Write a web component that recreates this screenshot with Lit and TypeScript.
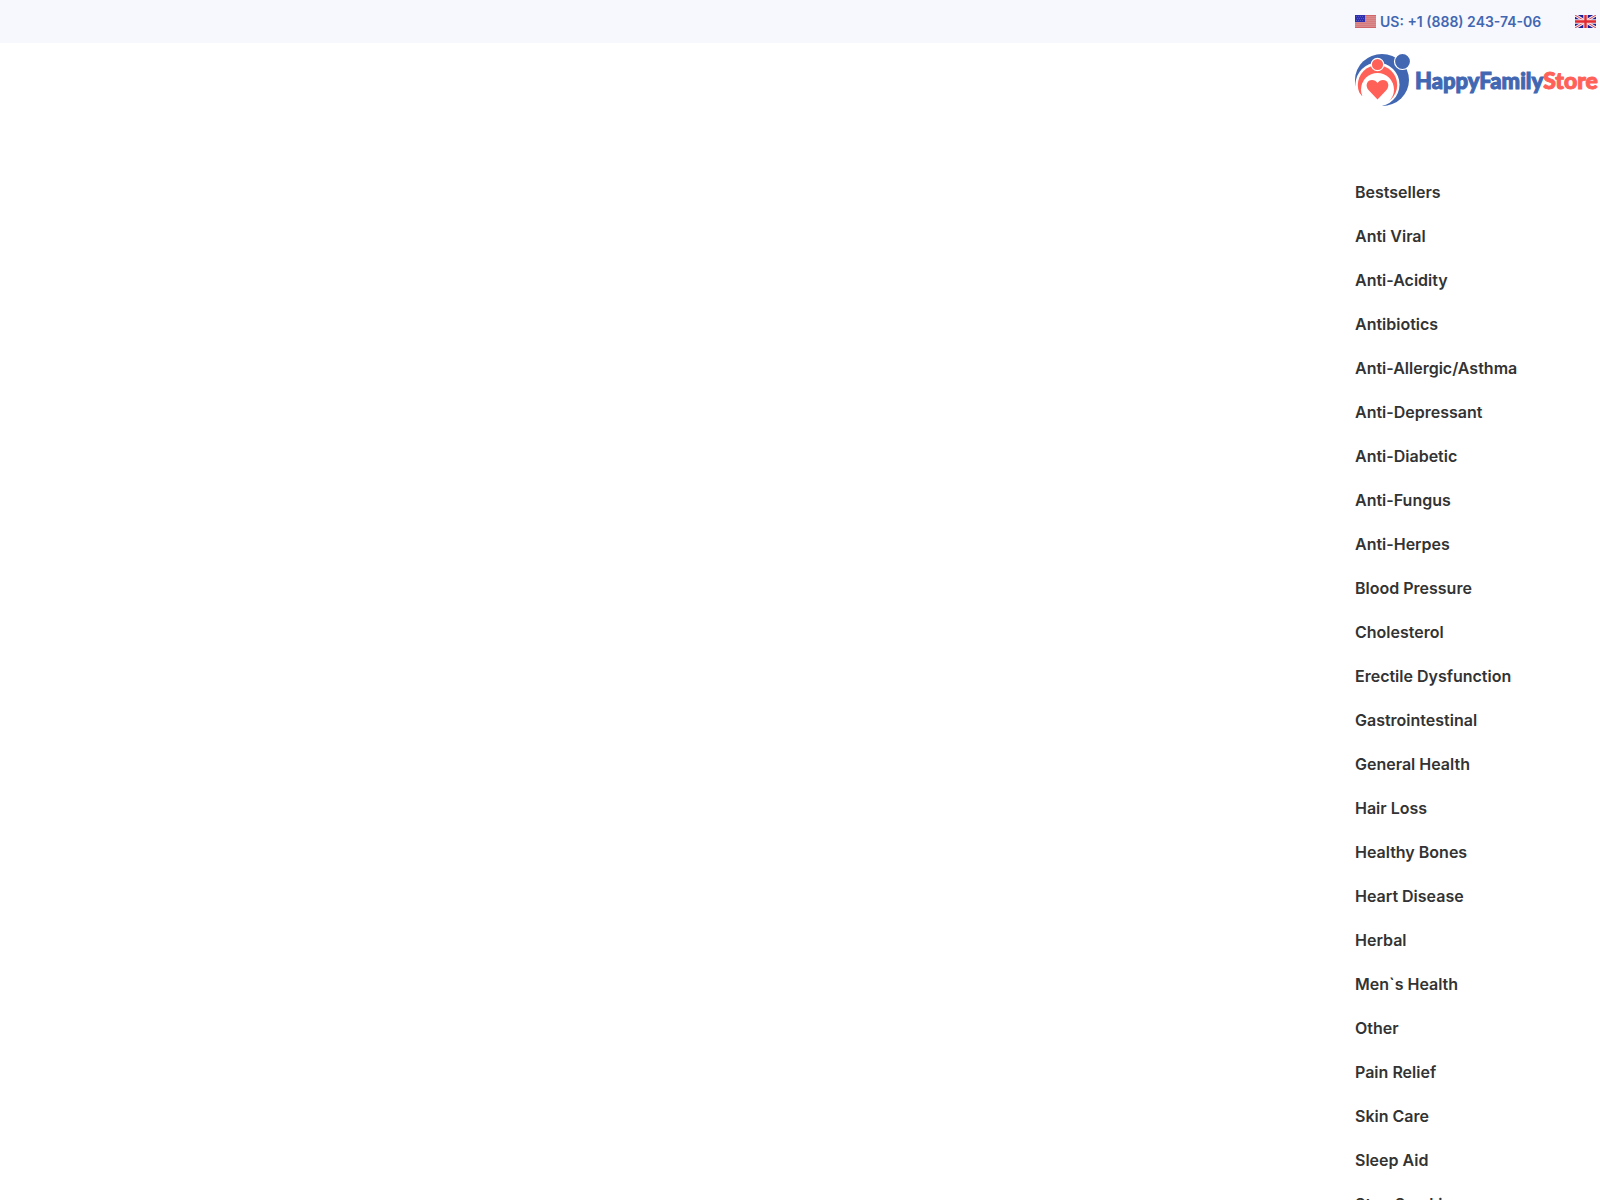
import { LitElement, html, css, svg } from "lit";
import { customElement } from "lit/decorators.js";

const CATEGORIES = [
  "Bestsellers", "Anti Viral", "Anti-Acidity", "Antibiotics", "Anti-Allergic/Asthma",
  "Anti-Depressant", "Anti-Diabetic", "Anti-Fungus", "Anti-Herpes", "Blood Pressure",
  "Cholesterol", "Erectile Dysfunction", "Gastrointestinal", "General Health", "Hair Loss",
  "Healthy Bones", "Heart Disease", "Herbal", "Men`s Health", "Other", "Pain Relief",
  "Skin Care", "Sleep Aid", "Stop Smoking",
];

const usFlag = html`
  <svg class="flag" viewBox="0 0 21 13" aria-hidden="true">
    <rect width="21" height="13" fill="#d98a8c" />
    ${[0, 2, 4, 6, 8, 10, 12].map((y) => svg`<rect y=${y} width="21" height="1" fill="#d67c7e" />`)}
    <rect width="21" height="1" fill="#cf6568" />
    <rect y="12" width="21" height="1" fill="#cf6568" />
    <rect width="10" height="7" fill="#2d2fae" />
    ${[1, 3, 5].map((y) => [1, 3, 5, 7].map((x) => svg`<rect x=${x + (y === 3 ? 1 : 0)} y=${y} width="1" height="1" fill="#5658bd" />`))}
  </svg>`;

const ukFlag = html`
  <svg class="flag" viewBox="0 0 21 13" aria-hidden="true">
    <rect width="21" height="13" fill="#1c1f96" />
    <path d="M0 0L21 13M21 0L0 13" stroke="#f0e8f0" stroke-width="3" />
    <path d="M0 0L21 13M21 0L0 13" stroke="#dc4a50" stroke-width="1" />
    <path d="M10.5 0V13M0 6.5H21" stroke="#f5dfe4" stroke-width="4.4" />
    <path d="M10.5 0V13M0 6.5H21" stroke="#e02b32" stroke-width="2.4" />
  </svg>`;

const emblem = html`
  <svg class="emblem" viewBox="0 0 56 54" aria-hidden="true">
    <ellipse cx="27" cy="27" rx="27" ry="26" fill="#4267b2" />
    <circle cx="22.5" cy="31.5" r="22" fill="#fff" />
    <path d="M0 32L5 46L16 54H0Z" fill="#fff" />
    <circle cx="22.5" cy="32" r="19.7" fill="#ff6159" />
    <circle cx="22.5" cy="36.5" r="16.5" fill="#fff" />
    <path d="M2 37L7 43Q13 41 26 52L16 54H2Z" fill="#fff" />
    <circle cx="22.5" cy="11.5" r="6.2" fill="#ff6159" stroke="#fff" stroke-width="1.2" />
    <circle cx="47.5" cy="8.5" r="8" fill="#4267b2" stroke="#fff" stroke-width="1.2" />
    <path d="M22.5 46.5L13.5 37C9.5 32 12.5 27 17 27Q20.5 27 22.5 30Q24.5 27 28 27C32.5 27 35.5 32 31.5 37Z" fill="#ff6159" />
  </svg>`;

@customElement("app-root")
export class AppRoot extends LitElement {
  static styles = css`
    :host {
      display: block;
      height: 100vh;
      overflow: hidden;
      background: #fff;
      color: #333;
      font-family: Inter, "Liberation Sans", sans-serif;
    }
    a { color: inherit; text-decoration: none; }
    .band {
      display: grid;
      grid-template-columns: minmax(0, 1fr) 245px;
    }
    .inner { grid-column: 2; min-width: 0; }
    .top { background: #f7f8fe; }
    .phones {
      display: flex;
      align-items: center;
      gap: 34px;
      height: 43px;
      overflow: hidden;
      color: #4267b2;
      font-size: 14px;
      font-weight: 600;
      white-space: nowrap;
    }
    .phone { display: flex; align-items: center; gap: 4px; flex: none; }
    .flag { width: 21px; height: 13px; flex: none; }
    .logo {
      display: flex;
      align-items: center;
      gap: 4px;
      padding-top: 10px;
      color: #4267b2;
      font-family: Lato, sans-serif;
      font-size: 22px;
      font-weight: 900;
      line-height: 32px;
      white-space: nowrap;
      -webkit-text-stroke: 1px currentColor;
    }
    .emblem { width: 56px; height: 54px; flex: none; }
    .accent { color: #ff6159; font-size: 23px; }
    .menu {
      display: flex;
      flex-direction: column;
      gap: 24px;
      margin: 0;
      padding: 75px 0 0;
      list-style: none;
      font-size: 16px;
      font-weight: 600;
      line-height: 20px;
    }
  `;

  render() {
    return html`
      <div class="band top">
        <div class="inner phones">
          <a class="phone" href="tel:+18882437406">${usFlag}<span>US: +1 (888) 243-74-06</span></a>
          <a class="phone" href="#uk" aria-label="UK">${ukFlag}</a>
        </div>
      </div>
      <header class="band">
        <a class="inner logo" href="#home">${emblem}<span>HappyFamily<span class="accent">Store</span></span></a>
      </header>
      <nav class="band">
        <ul class="inner menu">
          ${CATEGORIES.map((name) => html`<li><a href="#category">${name}</a></li>`)}
        </ul>
      </nav>
    `;
  }
}
